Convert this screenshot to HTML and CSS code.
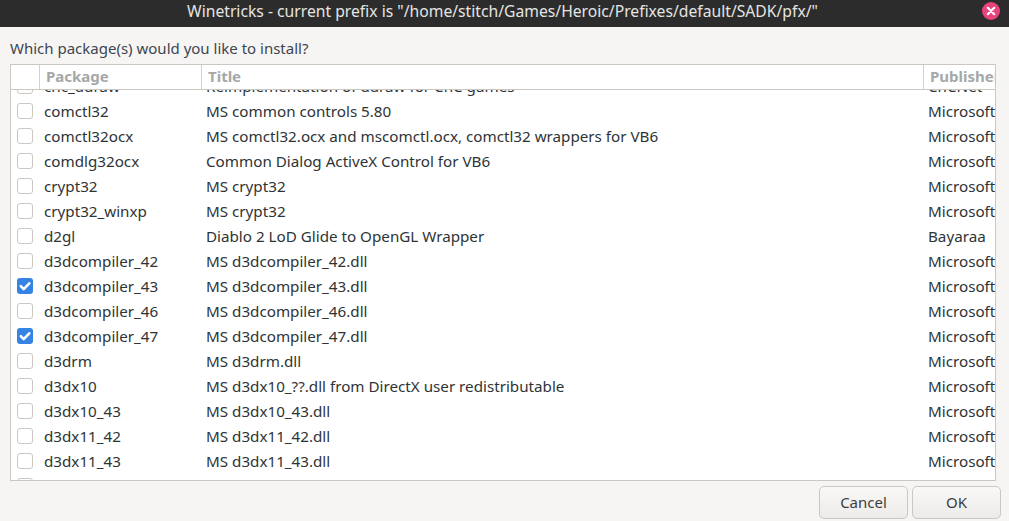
FILE: index.html
```html
<!DOCTYPE html>
<html lang="en">
<head>
<meta charset="utf-8">
<title>Winetricks</title>
<link rel="stylesheet" href="styles.css">
</head>
<body>
<div class="window">
  <header class="titlebar">
    <span class="title">Winetricks - current prefix is "/home/stitch/Games/Heroic/Prefixes/default/SADK/pfx/"</span>
    <span class="close"><svg viewBox="0 0 18 18" width="18" height="18"><circle cx="9" cy="9" r="9" fill="#e9437f"/><path d="M5.8 5.8l6.4 6.4M12.2 5.8l-6.4 6.4" stroke="#fff" stroke-width="2.2" stroke-linecap="round"/></svg></span>
  </header>
  <main class="content">
    <p class="prompt">Which package(s) would you like to install?</p>
    <section class="tree">
      <div class="row head">
        <span class="cell check"></span>
        <span class="cell">Package</span>
        <span class="cell">Title</span>
        <span class="cell">Publisher</span>
      </div>
      <div class="body">
        <div class="rows">
          <div class="row"><span class="cell check"><i class="box"></i></span><span class="cell">cnc_ddraw</span><span class="cell">Reimplementation of ddraw for CnC games</span><span class="cell">CnCNet</span></div>
          <div class="row"><span class="cell check"><i class="box"></i></span><span class="cell">comctl32</span><span class="cell">MS common controls 5.80</span><span class="cell">Microsoft</span></div>
          <div class="row"><span class="cell check"><i class="box"></i></span><span class="cell">comctl32ocx</span><span class="cell">MS comctl32.ocx and mscomctl.ocx, comctl32 wrappers for VB6</span><span class="cell">Microsoft</span></div>
          <div class="row"><span class="cell check"><i class="box"></i></span><span class="cell">comdlg32ocx</span><span class="cell">Common Dialog ActiveX Control for VB6</span><span class="cell">Microsoft</span></div>
          <div class="row"><span class="cell check"><i class="box"></i></span><span class="cell">crypt32</span><span class="cell">MS crypt32</span><span class="cell">Microsoft</span></div>
          <div class="row"><span class="cell check"><i class="box"></i></span><span class="cell">crypt32_winxp</span><span class="cell">MS crypt32</span><span class="cell">Microsoft</span></div>
          <div class="row"><span class="cell check"><i class="box"></i></span><span class="cell">d2gl</span><span class="cell">Diablo 2 LoD Glide to OpenGL Wrapper</span><span class="cell">Bayaraa</span></div>
          <div class="row"><span class="cell check"><i class="box"></i></span><span class="cell">d3dcompiler_42</span><span class="cell">MS d3dcompiler_42.dll</span><span class="cell">Microsoft</span></div>
          <div class="row"><span class="cell check"><i class="box on"><svg viewBox="0 0 16 16" width="16" height="16"><path d="M3.8 8.2l2.9 2.9 5.6-5.8" fill="none" stroke="#fff" stroke-width="2.6" stroke-linecap="round" stroke-linejoin="round"/></svg></i></span><span class="cell">d3dcompiler_43</span><span class="cell">MS d3dcompiler_43.dll</span><span class="cell">Microsoft</span></div>
          <div class="row"><span class="cell check"><i class="box"></i></span><span class="cell">d3dcompiler_46</span><span class="cell">MS d3dcompiler_46.dll</span><span class="cell">Microsoft</span></div>
          <div class="row"><span class="cell check"><i class="box on"><svg viewBox="0 0 16 16" width="16" height="16"><path d="M3.8 8.2l2.9 2.9 5.6-5.8" fill="none" stroke="#fff" stroke-width="2.6" stroke-linecap="round" stroke-linejoin="round"/></svg></i></span><span class="cell">d3dcompiler_47</span><span class="cell">MS d3dcompiler_47.dll</span><span class="cell">Microsoft</span></div>
          <div class="row"><span class="cell check"><i class="box"></i></span><span class="cell">d3drm</span><span class="cell">MS d3drm.dll</span><span class="cell">Microsoft</span></div>
          <div class="row"><span class="cell check"><i class="box"></i></span><span class="cell">d3dx10</span><span class="cell">MS d3dx10_??.dll from DirectX user redistributable</span><span class="cell">Microsoft</span></div>
          <div class="row"><span class="cell check"><i class="box"></i></span><span class="cell">d3dx10_43</span><span class="cell">MS d3dx10_43.dll</span><span class="cell">Microsoft</span></div>
          <div class="row"><span class="cell check"><i class="box"></i></span><span class="cell">d3dx11_42</span><span class="cell">MS d3dx11_42.dll</span><span class="cell">Microsoft</span></div>
          <div class="row"><span class="cell check"><i class="box"></i></span><span class="cell">d3dx11_43</span><span class="cell">MS d3dx11_43.dll</span><span class="cell">Microsoft</span></div>
          <div class="row"><span class="cell check"><i class="box"></i></span><span class="cell">d3dx9</span><span class="cell">MS d3dx9_??.dll from DirectX 9 redistributable</span><span class="cell">Microsoft</span></div>
        </div>
      </div>
    </section>
    <footer class="actions">
      <button class="btn">Cancel</button>
      <button class="btn">OK</button>
    </footer>
  </main>
</div>
</body>
</html>
```
FILE: styles.css
```css
* { box-sizing: border-box; }
html, body { margin: 0; height: 100%; overflow: hidden; }
body { font-family: "Noto Sans", "Open Sans", sans-serif; font-size: 15px; color: #3d3d3d; background: #f6f5f4; }
.window { width: 1009px; height: 521px; display: flex; flex-direction: column; }
.titlebar { height: 27px; flex: none; background: #2c2c2c; color: #e4e4e2; display: flex; align-items: center; justify-content: center; padding-bottom: 5px; padding-right: 4px; position: relative; font-size: 15.7px; }
.close { position: absolute; right: 9px; top: 2px; width: 18px; height: 18px; }
.close svg { display: block; }
.content { flex: 1; padding: 0 13px 0 10px; display: flex; flex-direction: column; min-height: 0; }
.prompt { margin: 0; height: 37px; padding-top: 11px; line-height: 20px; color: #3d4650; }
.tree { height: 417px; width: 986px; border: 1px solid #cdc7c2; background: #fff; display: flex; flex-direction: column; flex: none; }
.row { display: grid; grid-template-columns: 28px 162px 722px 72px; height: 25px; align-items: center; color: #2e3436; font-size: 15.2px; }
.cell { padding-left: 5px; padding-bottom: 2px; white-space: nowrap; overflow: hidden; }
.head { height: 25px; flex: none; border-bottom: 1px solid #cdc7c2; color: #a5a8a8; font-weight: 700; font-size: 15px; }
.head .cell { height: 24px; line-height: 23px; padding-left: 6px; padding-bottom: 0; border-left: 1px solid #d5d0cc; }
.head .check { border-left: 0; }
.body { flex: 1; overflow: hidden; min-height: 0; }
.rows { margin-top: -16px; }
.check { padding: 0 0 0 6px; height: 25px; display: flex; align-items: flex-start; padding-top: 4px; overflow: visible; }
.box { display: block; width: 16px; height: 16px; border: 1px solid #cdc7c2; border-radius: 3px; background: #fff; }
.box.on { border: 0; background: #3584e4; }
.box svg { display: block; }
.actions { flex: none; display: flex; justify-content: flex-end; gap: 4px; padding-top: 5px; margin-right: -5px; }
.btn { width: 89px; height: 33px; border: 1px solid #cdc7c2; border-radius: 5px; background: linear-gradient(#f9f8f7, #ecebe9); color: #3d3d3d; font: inherit; padding: 0 0 2px; }
```
